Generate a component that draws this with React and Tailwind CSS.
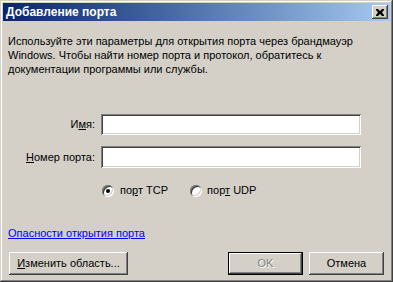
export default function App() {
  const font = { fontFamily: '"Liberation Sans", Arial, sans-serif' };
  const raised =
    "shadow-[inset_-1px_-1px_#404040,inset_1px_1px_#ffffff,inset_-2px_-2px_#808080,inset_2px_2px_#d4d0c8]";
  const sunken =
    "shadow-[inset_1px_1px_#808080,inset_-1px_-1px_#ffffff,inset_2px_2px_#404040,inset_-2px_-2px_#d4d0c8]";

  return (
    <div
      className="w-[393px] h-[282px] bg-[#d4d0c8] p-[3px] text-[11px] leading-[13px] text-black shadow-[inset_-1px_-1px_#404040,inset_1px_1px_#d4d0c8,inset_-2px_-2px_#808080,inset_2px_2px_#ffffff] flex flex-col"
      style={font}
    >
      {/* Title bar */}
      <div className="h-[18px] flex items-center justify-between bg-gradient-to-r from-[#0a246a] to-[#a6caf0] pl-[3px] pr-[2px]">
        <span className="text-white font-bold text-[12px]">Добавление порта</span>
        <div className={`w-[16px] h-[14px] bg-[#d4d0c8] flex items-center justify-center ${raised}`}>
          <svg width="8" height="7" viewBox="0 0 8 7">
            <path d="M0 0h2l2 2 2-2h2v1l-2 2.5 2 2.5v1h-2l-2-2-2 2h-2v-1l2-2.5-2-2.5z" fill="#000" />
          </svg>
        </div>
      </div>

      {/* Body */}
      <div className="flex-1 flex flex-col px-[5px]">
        <p className="mt-[13px] leading-[14px]">
          Используйте эти параметры для открытия порта через брандмауэр Windows. Чтобы найти номер порта и протокол, обратитесь к документации программы или службы.
        </p>

        <div className="mt-[38px] flex items-center">
          <div className="w-[93px] text-right pr-[6px]">
            И<u>м</u>я:
          </div>
          <div className={`w-[260px] h-[21px] bg-white ${sunken}`} />
        </div>
        <div className="mt-[11px] flex items-center">
          <div className="w-[93px] text-right pr-[6px]">
            <u>Н</u>омер порта:
          </div>
          <div className={`w-[260px] h-[22px] bg-white ${sunken}`} />
        </div>

        <div className="mt-[16px] flex items-center pl-[94px]">
          <div className={`w-[12px] h-[12px] rounded-full bg-white flex items-center justify-center ${sunken}`}>
            <div className="w-[4px] h-[4px] rounded-full bg-black" />
          </div>
          <span className="ml-[6px]">
            по<u>р</u>т TCP
          </span>
          <div className={`ml-[22px] w-[12px] h-[12px] rounded-full bg-white ${sunken}`} />
          <span className="ml-[5px]">
            пор<u>т</u> UDP
          </span>
        </div>

        <div className="mt-[30px]">
          <span className="text-[#0000ff] underline">Опасности открытия порта</span>
        </div>

        <div className="mt-[12px] flex items-center">
          <div className={`ml-[1px] w-[119px] h-[23px] flex items-center justify-center ${raised}`}>
            <span>
              <u>И</u>зменить область...
            </span>
          </div>
          <div className="ml-auto w-[75px] h-[23px] border border-black">
            <div className={`w-full h-full flex items-center justify-center text-[#808080] [text-shadow:1px_1px_#ffffff] ${raised}`}>
              OK
            </div>
          </div>
          <div className={`ml-[6px] mr-[1px] w-[75px] h-[23px] flex items-center justify-center ${raised}`}>
            Отмена
          </div>
        </div>
      </div>
    </div>
  );
}
